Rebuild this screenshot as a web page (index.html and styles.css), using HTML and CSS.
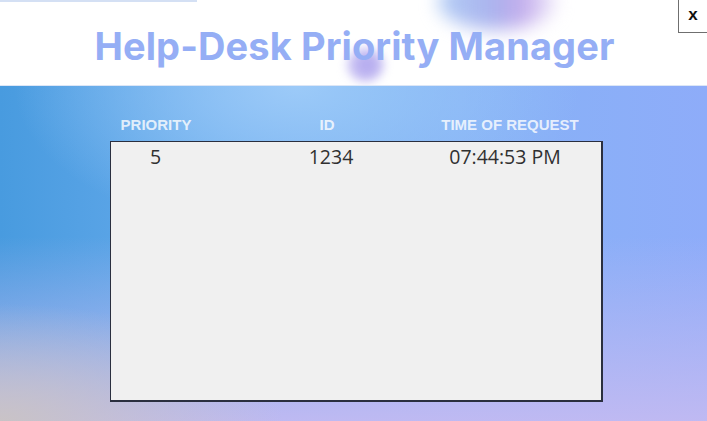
FILE: index.html
```html
<!DOCTYPE html>
<html lang="en">
<head>
<meta charset="utf-8">
<title>Help-Desk Priority Manager</title>
<link rel="stylesheet" href="styles.css">
</head>
<body>
<div class="app">
  <header class="header">
    <div class="top-line"></div>
    <div class="blob blob-a"></div>
    <div class="blob blob-b"></div>
    <h1 class="title">Help-Desk Priority Manager</h1>
    <button class="close" type="button">x</button>
  </header>
  <main class="board">
    <div class="table">
      <div class="cols head">
        <div class="cell">PRIORITY</div>
        <div class="cell">ID</div>
        <div class="cell">TIME OF REQUEST</div>
      </div>
      <div class="list">
        <div class="row">
          <div class="cell">5</div>
          <div class="cell">1234</div>
          <div class="cell">07:44:53 PM</div>
        </div>
      </div>
    </div>
  </main>
</div>
</body>
</html>
```
FILE: styles.css
```css
html, body {
  margin: 0;
  padding: 0;
}
body {
  width: 707px;
  height: 421px;
  overflow: hidden;
  font-family: "Liberation Sans", Arial, sans-serif;
}
.app {
  display: flex;
  flex-direction: column;
  height: 421px;
}
.header {
  position: relative;
  height: 85px;
  background: #ffffff;
  display: flex;
  justify-content: center;
  overflow: hidden;
}
.top-line {
  position: absolute;
  left: 0;
  top: 0;
  width: 197px;
  height: 2px;
  background: #d4e0f4;
}
.blob {
  position: absolute;
  border-radius: 50%;
}
.blob-a {
  left: 438px;
  top: -26px;
  width: 118px;
  height: 56px;
  background: linear-gradient(to right, rgba(170,200,244,0.9), #aab4ee 45%, #c2acec 70%, rgba(230,220,248,0.6));
  filter: blur(9px);
}
.blob-b {
  left: 346px;
  top: 48px;
  width: 38px;
  height: 34px;
  background: radial-gradient(circle at 55% 50%, #b0a6ee 0%, #c4bcf2 50%, rgba(220,214,250,0) 100%);
  filter: blur(5px);
}
.title {
  position: relative;
  margin: 24px 0 0 2px;
  font-family: Inter, "Liberation Sans", sans-serif;
  font-weight: 700;
  font-size: 38px;
  line-height: 44px;
  letter-spacing: 0.1px;
  color: #95aef5;
}
.close {
  position: absolute;
  top: 0;
  right: 0;
  width: 29px;
  height: 33px;
  padding: 0 0 3px;
  background: #ffffff;
  border: none;
  border-left: 1px solid #6f6f6f;
  border-bottom: 1px solid #6f6f6f;
  font-family: "Liberation Sans", Arial, sans-serif;
  font-weight: 700;
  font-size: 17px;
  color: #111111;
}
.board {
  flex: 1;
  border-top: 1px solid #dce6f6;
  background:
    radial-gradient(ellipse 40% 35% at 0% 100%, #c9c3c6 0%, rgba(201,195,198,0) 100%),
    radial-gradient(ellipse 40% 45% at 42% 0%, #9ccaf8 0%, rgba(156,202,248,0) 100%),
    linear-gradient(to bottom, rgba(192,184,240,0) 45%, rgba(194,186,242,0.95) 100%),
    linear-gradient(to right, #489bdf 0%, #6aaced 32%, #86b2f6 65%, #8eacf9 100%);
  display: flex;
  justify-content: flex-start;
}
.table {
  margin-left: 110px;
  margin-top: 30px;
  width: 493px;
}
.cols, .row {
  display: grid;
}
.cell {
  display: flex;
  justify-content: center;
  white-space: nowrap;
}
.head {
  grid-template-columns: 92px 250px 116px;
  font-size: 15px;
  font-weight: 700;
  line-height: 17px;
  color: rgba(255,255,255,0.8);
  height: 25px;
}
.list {
  box-sizing: border-box;
  height: 261px;
  background: #f0f0f0;
  border: 1px solid #2a2f3f;
  border-right-width: 2px;
  border-bottom-width: 2px;
}
.row {
  grid-template-columns: 89px 262px 86px;
  padding-top: 2px;
  font-family: "Open Sans", sans-serif;
  font-size: 19.5px;
  line-height: 26px;
  color: #303030;
}
```
